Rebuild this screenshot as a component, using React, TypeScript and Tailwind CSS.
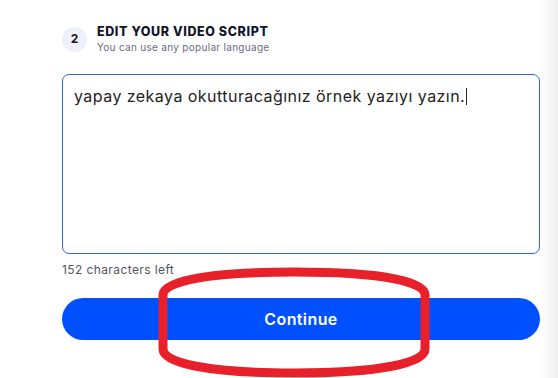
import React from "react";

function StepHeader({ step, title, subtitle }: { step: number; title: string; subtitle: string }) {
  return (
    <div className="flex items-center gap-[10px]">
      <div className="flex h-[25px] w-[25px] items-center justify-center rounded-full bg-[#eef1f9] text-[12px] font-bold text-[#14142b]">
        {step}
      </div>
      <div className="flex flex-col">
        <span className="text-[12.5px] font-extrabold leading-[16px] tracking-[0.6px] text-[#14142b]">{title}</span>
        <span className="text-[10px] leading-[14px] tracking-[0.3px] text-[#6b6b80]">{subtitle}</span>
      </div>
    </div>
  );
}

export default function App() {
  const script = "yapay zekaya okutturacağınız örnek yazıyı yazın.";
  const maxChars = 200;

  return (
    <div className="flex h-[378px] w-[558px] overflow-hidden bg-white font-['Inter',sans-serif]">
      <div className="flex w-[540px] flex-col pl-[62px] pt-[24px]">
        <StepHeader step={2} title="EDIT YOUR VIDEO SCRIPT" subtitle="You can use any popular language" />

        {/* script box */}
        <div className="mt-[20px] h-[180px] w-[478px] rounded-[7px] border border-[#2f62f2] px-[11px] pt-[9px]">
          <p className="text-[16px] leading-[24px] tracking-[0.45px] text-[#222]">
            {script}
            <span className="ml-[1px] inline-block h-[17px] w-[1px] translate-y-[3px] bg-[#222]" />
          </p>
        </div>

        <span className="mt-[8px] text-[12px] leading-[16px] tracking-[0.4px] text-[#55555f]">
          {maxChars - script.length} characters left
        </span>

        <div className="relative mt-[20px] w-[478px]">
          <button className="h-[42px] w-full rounded-full bg-[#0050ff] text-[16px] font-semibold tracking-[0.4px] text-white">
            Continue
          </button>
          {/* red highlight drawn over the button */}
          <svg className="absolute left-[96px] top-[-31px]" width="272" height="112" viewBox="0 0 272 112">
            <path
              d="M5 28 C5 14 50 5 136 5 C222 5 267 14 267 28 L267 82 C267 96 222 106 136 106 C50 106 5 96 5 82 Z"
              fill="none"
              stroke="#e8202a"
              strokeWidth="9"
            />
          </svg>
        </div>
      </div>
      <div className="flex-1 bg-gradient-to-r from-white to-[#f0f0f0]" />
    </div>
  );
}
